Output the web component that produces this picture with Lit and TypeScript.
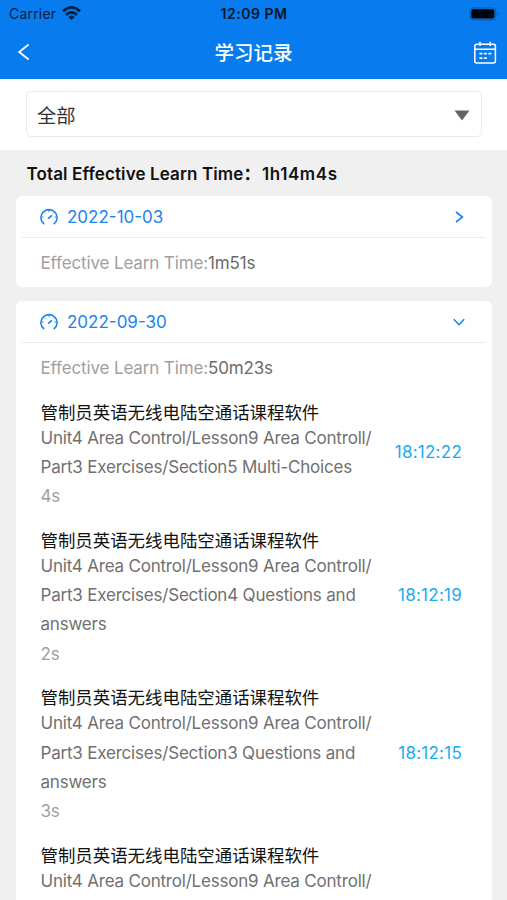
import { LitElement, html, css, nothing } from "lit";
import { customElement } from "lit/decorators.js";

interface Item { lines: string[]; duration?: string; time?: string }
interface Day { date: string; total: string; items: Item[] }

const unit = "Unit4 Area Control/Lesson9 Area Controll/";
const days: Day[] = [
  { date: "2022-10-03", total: "1m51s", items: [] },
  {
    date: "2022-09-30",
    total: "50m23s",
    items: [
      { lines: [unit, "Part3 Exercises/Section5 Multi-Choices"], duration: "4s", time: "18:12:22" },
      { lines: [unit, "Part3 Exercises/Section4 Questions and", "answers"], duration: "2s", time: "18:12:19" },
      { lines: [unit, "Part3 Exercises/Section3 Questions and", "answers"], duration: "3s", time: "18:12:15" },
      { lines: [unit] },
    ],
  },
];

@customElement("app-root")
export class AppRoot extends LitElement {
  static styles = css`
    :host { display: block; height: 900px; overflow: hidden; background: #f0f0f0; font-family: Inter, "Noto Sans CJK SC", sans-serif; color: #111; }
    * { box-sizing: border-box; }
    svg { display: block; fill: none; stroke: currentColor; flex: none; }
    .top { background: #087bee; height: 79px; }
    .status { height: 27px; display: grid; grid-template-columns: 1fr auto 1fr; align-items: center; padding: 0 8px 0 9px; font-size: 14px; color: #06203f; }
    .clock { font-weight: 600; color: #04162c; font-size: 14px; letter-spacing: 0.5px; }
    .carrier { display: flex; gap: 6px; align-items: center; letter-spacing: 0.2px; }
    .wifi { margin-bottom: 1px; }
    .battery { justify-self: end; }
    .nav { height: 50px; display: grid; grid-template-columns: 60px 1fr 60px; align-items: center; color: #fff; padding: 0 10px 0 16px; }
    .title { text-align: center; font-size: 19.5px; font-weight: 500; margin: -2px 0 0 -6px; }
    .calendar { justify-self: end; margin-top: 1px; }
    .filter { background: #fff; height: 71px; padding: 12px 25px 0 26px; }
    .select { height: 46px; border: 1px solid #ebebeb; border-radius: 5px; display: flex; align-items: center; justify-content: space-between; padding: 2px 11px 0 10px; font-size: 19.3px; color: #333; }
    .total { height: 46px; line-height: 49px; padding-left: 26.5px; font-weight: 600; font-size: 17px; white-space: nowrap; display: flex; }
    .total-label { width: 235.5px; letter-spacing: 0.12px; }
    .total-value { letter-spacing: 0.6px; }
    .card { background: #fff; border-radius: 6px; margin: 0 15px 14px 16px; padding: 0 6px; }
    .head { height: 42px; border-bottom: 1px solid #ececec; display: flex; align-items: center; padding: 0 20px 0 18px; color: #1c82f2; font-size: 17px; }
    .date { flex: 1; margin-left: 9px; }
    .sum { height: 49px; line-height: 51px; padding-left: 18.5px; font-size: 17px; color: #a0a0a0; letter-spacing: -0.14px; }
    .value { color: #6b6b6b; }
    .item { display: flex; align-items: center; padding: 9.6px 24px 8.9px 18.5px; justify-content: space-between; }
    .name { font-size: 17.43px; line-height: 22px; height: 22px; white-space: nowrap; }
    .line { font-size: 17px; line-height: 29.25px; color: #707070; white-space: nowrap; letter-spacing: -0.2px; }
    .line.duration { color: #a0a0a0; }
    .time { color: #1aabf0; font-size: 17px; padding-bottom: 8px; letter-spacing: 0.25px; }
  `;

  private day(d: Day) {
    const open = d.items.length > 0;
    return html`<section class="card">
      <div class="head">
        <svg width="18" height="18" viewBox="0 0 18 18" stroke-width="1.6">
          <path d="M4.2 16.2A8.1 8.1 0 1 1 13.8 16.2M8 10.6L12 7.4" />
          <path d="M9 2v2M4 4.5l1 1M14 4.5l-1 1M2 9h1.5M14.5 9H16" stroke-width="1" />
        </svg>
        <span class="date">${d.date}</span>
        <svg width="14" height="14" viewBox="0 0 14 14" stroke-width="1.6">
          <path d=${open ? "M1.8 4.3L7 9.7L12.2 4.3" : "M4 2L10.4 7L4 12"} />
        </svg>
      </div>
      <div class="sum">Effective Learn Time:<span class="value">${d.total}</span></div>
      ${open ? d.items.map((i) => this.item(i)) : nothing}
    </section>`;
  }

  private item(i: Item) {
    return html`<div class="item">
      <div>
        <div class="name">管制员英语无线电陆空通话课程软件</div>
        ${i.lines.map((l) => html`<div class="line">${l}</div>`)}
        ${i.duration ? html`<div class="line duration">${i.duration}</div>` : nothing}
      </div>
      ${i.time ? html`<div class="time">${i.time}</div>` : nothing}
    </div>`;
  }

  render() {
    return html`
      <header class="top">
        <div class="status">
          <div class="carrier">
            <span>Carrier</span>
            <svg class="wifi" width="19" height="14" viewBox="0 0 19 14" stroke-width="2.8">
              <path d="M1 5.2Q9.5 -2.4 18 5.2M4 8.9Q9.5 3.9 15 8.9" />
              <path d="M6.3 11Q9.5 8.2 12.7 11L9.5 14Z" fill="currentColor" stroke="none" />
            </svg>
          </div>
          <span class="clock">12:09 PM</span>
          <svg class="battery" width="30" height="14" viewBox="0 0 30 14">
            <rect x="0.8" y="0.8" width="26" height="12" rx="3.5" stroke="#075eb5" stroke-width="1.2" />
            <rect x="2.2" y="2.2" width="23.2" height="9.2" rx="2" fill="#00060d" stroke="none" />
            <path d="M28.2 5v3.6q1.4-.6 1.4-1.8T28.2 5Z" fill="#075eb5" stroke="none" />
          </svg>
        </div>
        <nav class="nav">
          <svg width="16" height="18" viewBox="0 0 16 18" stroke-width="1.8"><path d="M12.6 1.5L3.2 9L12.6 16.5" /></svg>
          <span class="title">学习记录</span>
          <svg class="calendar" width="24" height="24" viewBox="0 0 24 24" stroke-width="1.5">
            <rect x="1.8" y="3.2" width="20.6" height="18.8" rx="2" />
            <path d="M2 8.2H22M7 0.8V5M17.2 0.8V5" />
            <path d="M6.4 12.6h3M10.9 12.6h3M15.4 12.6h3M6.4 17.1h3M10.9 17.1h3" stroke-width="1.8" />
          </svg>
        </nav>
      </header>
      <div class="filter">
        <div class="select">
          <span>全部</span>
          <svg width="16" height="11" viewBox="0 0 16 11"><path d="M0.5 0.5H15.5L8 10.5Z" fill="#666" stroke="none" /></svg>
        </div>
      </div>
      <div class="total"><span class="total-label">Total Effective Learn Time：</span><span class="total-value">1h14m4s</span></div>
      ${days.map((d) => this.day(d))}
    `;
  }
}
